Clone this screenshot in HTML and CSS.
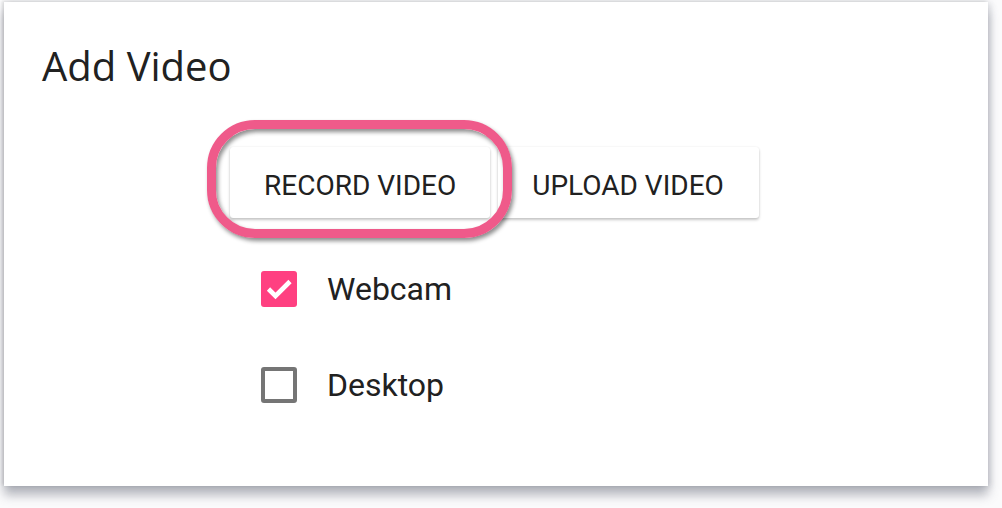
FILE: index.html
```html
<!DOCTYPE html>
<html>
<head>
<meta charset="utf-8">
<link rel="stylesheet" href="styles.css">
</head>
<body>
<div class="card">
  <h1 class="title">Add Video</h1>
  <div class="content">
    <div class="btn-group">
      <button class="btn">Record Video</button>
      <button class="btn">Upload Video</button>
      <span class="ring"></span>
    </div>
    <ul class="options">
      <li class="option">
        <span class="box checked">
          <svg viewBox="0 0 36 36" width="36" height="36"><polyline points="7.5,18 14.5,25 29,10.5" fill="none" stroke="#fff" stroke-width="4.6" stroke-linecap="butt" stroke-linejoin="miter"/></svg>
        </span>
        <span class="label">Webcam</span>
      </li>
      <li class="option">
        <span class="box"></span>
        <span class="label">Desktop</span>
      </li>
    </ul>
  </div>
</div>
</body>
</html>
```
FILE: styles.css
```css
html, body {
  margin: 0;
  padding: 0;
  background: #ffffff;
}
body {
  width: 1002px;
  height: 508px;
  overflow: hidden;
  background: #fbfbfc;
}
.card {
  box-sizing: border-box;
  margin: 2px 0 0 4px;
  width: 984px;
  height: 484px;
  background: #ffffff;
  padding: 40px 0 0 38px;
  box-shadow: -2px -1px 3px rgba(0, 0, 0, 0.12), 0 9px 10px rgba(90, 95, 110, 0.45), 3px 0 6px rgba(120, 125, 140, 0.2);
}
.title {
  margin: 0;
  font-family: "Open Sans", sans-serif;
  font-weight: 400;
  font-size: 40px;
  line-height: 48px;
  color: #212121;
}
.content {
  margin: 57px 0 0 188px;
}
.btn-group {
  position: relative;
  display: flex;
  gap: 8px;
  width: max-content;
}
.btn {
  flex: none;
  white-space: nowrap;
  height: 71px;
  padding: 5px 34px 0 34px;
  border: none;
  border-radius: 3px;
  background: #ffffff;
  font-family: Roboto, sans-serif;
  font-size: 28px;
  font-weight: 400;
  text-transform: uppercase;
  color: #212121;
  box-shadow: 0 2px 3px rgba(0, 0, 0, 0.22), 0 0 2px rgba(0, 0, 0, 0.08);
}
.btn + .btn {
  padding-right: 35px;
}
.ring {
  position: absolute;
  left: -23px;
  top: -27px;
  width: 305px;
  height: 118px;
  box-sizing: border-box;
  border: 9px solid #ef5a8a;
  border-radius: 48px;
  box-shadow: 2px 3px 4px rgba(0, 0, 0, 0.45), inset 2px 3px 4px rgba(0, 0, 0, 0.45);
}
.options {
  list-style: none;
  margin: 53px 0 0 31px;
  padding: 0;
  display: flex;
  flex-direction: column;
  gap: 60px;
}
.option {
  display: flex;
  align-items: center;
  height: 36px;
  gap: 30px;
}
.box {
  box-sizing: border-box;
  width: 36px;
  height: 36px;
  border: 4px solid #757575;
  border-radius: 3px;
  flex: none;
}
.box.checked {
  border: none;
  background: #ff4081;
}
.box svg {
  display: block;
}
.label {
  font-family: Roboto, sans-serif;
  font-size: 32px;
  color: #212121;
  line-height: 36px;
}
```
